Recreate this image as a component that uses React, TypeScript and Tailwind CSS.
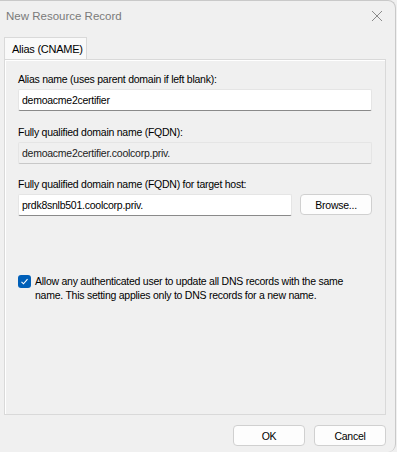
import React from "react";

function Field({ value, className = "", disabled = false }: { value: string; className?: string; disabled?: boolean }) {
  return (
    <div
      className={`flex h-[22px] items-center rounded-[2px] border border-[#e5e5e5] px-[3px] ${
        disabled ? "border-b-[#c8c8c8] bg-[#f0f0f0]" : "border-b-[#8a8a8a] bg-white"
      } ${className}`}
    >
      <span className={disabled ? "text-[#222]" : "text-black"}>{value}</span>
    </div>
  );
}

function Button({ label, className = "" }: { label: string; className?: string }) {
  return (
    <div
      className={`flex h-[21px] w-[72px] items-center justify-center rounded-[4px] border border-[#d0d0d0] bg-[#fdfdfd] ${className}`}
    >
      {label}
    </div>
  );
}

export default function App() {
  return (
    <div
      className="h-[452px] w-[397px] bg-[#f0f0f0] text-[10.5px] leading-[14px] tracking-[-0.25px] text-black"
      style={{ fontFamily: '"Liberation Sans", Arial, sans-serif' }}
    >
      <div className="flex h-full w-[396px] flex-col rounded-tr-[8px] rounded-br-[8px] border-r border-t border-[#c9c9c9] bg-[#f0f0f0]">
        <div className="flex h-[30px] items-center justify-between pl-[6px] pr-[12px]">
          <span className="text-[11.5px] tracking-normal text-[#7a7a7a]">New Resource Record</span>
          <svg width="12" height="12" viewBox="0 0 12 12" className="text-[#8a8a8a]">
            <path d="M1 1 L11 11 M11 1 L1 11" stroke="currentColor" strokeWidth="1" fill="none" />
          </svg>
        </div>

        <div className="ml-[4px] mt-[6px] w-[382px]">
          <div className="flex h-[22px] w-[83px] items-center whitespace-nowrap border border-b-0 border-[#d9d9d9] bg-[#f9f9f9] pl-[7px] text-[11px]">
            Alias (CNAME)
          </div>
          <div className="flex h-[356px] flex-col border border-[#d9d9d9] bg-[#f0f0f0] px-[13px] pt-[12px] shadow-[inset_1px_1px_0_#ffffff]">
            <div className="mb-[3px]">Alias name (uses parent domain if left blank):</div>
            <Field value="demoacme2certifier" />
            <div className="mb-[3px] mt-[14px]">Fully qualified domain name (FQDN):</div>
            <Field value="demoacme2certifier.coolcorp.priv." disabled />
            <div className="mb-[3px] mt-[13px]">Fully qualified domain name (FQDN) for target host:</div>
            <div className="flex items-start gap-[8px]">
              <Field value="prdk8snlb501.coolcorp.priv." className="w-[275px]" />
              <Button label="Browse..." />
            </div>
            <div className="mt-[58px] flex items-start gap-[4px]">
              <div className="mt-[1px] flex h-[13px] w-[13px] shrink-0 items-center justify-center rounded-[3px] bg-[#005fb8]">
                <svg width="9" height="9" viewBox="0 0 9 9">
                  <path d="M1.5 4.8 L3.5 6.8 L7.5 2.2" stroke="white" strokeWidth="1.1" fill="none" />
                </svg>
              </div>
              <div className="pr-[4px] leading-[14px]">
                Allow any authenticated user to update all DNS records with the same name. This setting applies only to DNS records for a new name.
              </div>
            </div>
          </div>
        </div>

        <div className="mt-[10px] flex justify-end gap-[9px] pr-[9px]">
          <Button label="OK" />
          <Button label="Cancel" />
        </div>
      </div>
    </div>
  );
}
